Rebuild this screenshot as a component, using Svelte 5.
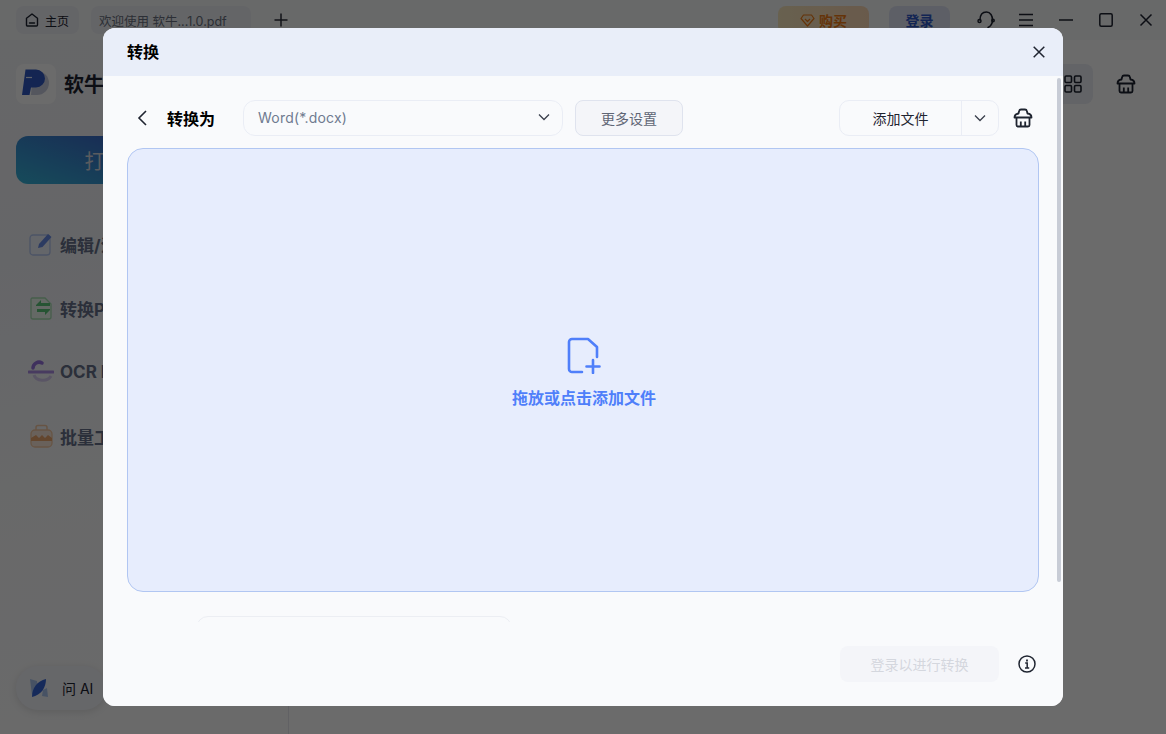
<script>
	const navItems = [
		{ label: '编辑/注释', icon: 'edit' },
		{ label: '转换PDF', icon: 'convert' },
		{ label: 'OCR PDF', icon: 'ocr' },
		{ label: '批量工具', icon: 'batch' }
	];
</script>

{#snippet basket(color)}
	<svg width="20" height="20" viewBox="0 0 20 20" fill="none" stroke={color} stroke-width="1.800" stroke-linejoin="round">
		<path d="M1.500 9.500C1.500 7 3 5.800 5.500 5.500L6.200 2.800Q6.500 1.500 8 1.500H12Q13.500 1.500 13.800 2.800L14.500 5.500C17 5.800 18.500 7 18.500 9.500z" />
		<path d="M3.500 9.500V17a1.500 1.500 0 0 0 1.500 1.500h10a1.500 1.500 0 0 0 1.500-1.500V9.500" />
		<path d="M7.800 13.500v5M12.200 13.500v5" />
	</svg>
{/snippet}

<div class="app">
	<header class="topbar">
		<div class="tab tab--home">
			<svg width="16" height="16" viewBox="0 0 16 16" fill="none" stroke="#1d2330" stroke-width="1.400">
				<path d="M2.500 6.300 8 2l5.500 4.300V13a1 1 0 0 1-1 1h-9a1 1 0 0 1-1-1z" stroke-linejoin="round" />
				<path d="M5.500 11h5" stroke-linecap="round" />
			</svg>
			<span>主页</span>
		</div>
		<div class="tab tab--file">欢迎使用 软牛...1.0.pdf</div>
		<svg class="plus" width="14" height="14" viewBox="0 0 14 14" stroke="#2a2f3a" stroke-width="1.500">
			<path d="M7 .5v13M.5 7h13" />
		</svg>
		<div class="spacer"></div>
		<div class="buy">
			<svg width="15" height="13" viewBox="0 0 15 13" fill="none" stroke="#f07b14" stroke-width="1.200" stroke-linejoin="round">
				<path d="M3.500 1h8L14 4.500 7.500 12 1 4.500z" />
				<path d="M5 5l2.500 2.500L10 5" />
			</svg>
			<span>购买</span>
		</div>
		<div class="login">登录</div>
		<div class="win-icons">
			<svg class="headset" width="18" height="18" viewBox="0 0 18 18" fill="none" stroke="#1d2330" stroke-width="1.500">
				<path d="M3 9C3 4 5.500 1 9.500 1s6 4 6 8c0 3.500-1.500 6-4.500 7.500" stroke-linecap="round" />
				<circle cx="2.500" cy="10" r="1.500" />
				<circle cx="16" cy="9.500" r="1.200" />
			</svg>
			<svg width="14" height="14" viewBox="0 0 14 14" stroke="#1d2330" stroke-width="1.500"><path d="M0 1.500h14M0 7h14M0 12.500h14" /></svg>
			<svg width="14" height="14" viewBox="0 0 14 14" stroke="#1d2330" stroke-width="1.500"><path d="M0 7h14" /></svg>
			<svg width="14" height="14" viewBox="0 0 14 14" fill="none" stroke="#1d2330" stroke-width="1.500"><rect x=".8" y=".8" width="12.400" height="12.400" rx="1.500" /></svg>
			<svg width="14" height="14" viewBox="0 0 14 14" stroke="#1d2330" stroke-width="1.500"><path d="M1.500 1.500l11 11M12.500 1.500l-11 11" /></svg>
		</div>
	</header>

	<div class="main">
		<aside class="sidebar">
			<div class="brand">
				<div class="brand__logo">
					<svg width="30" height="30" viewBox="0 0 30 30">
						<path d="M12 2h4a12 12 0 0 1 0 24h-6z" fill="#c9cee0" />
						<path d="M4.500 .5H15a9 9 0 0 1 0 18h-5L8.500 26H1z" fill="#3058c4" />
						<path d="M5 8.500h6" stroke="#dfe6f7" stroke-width="1.200" />
					</svg>
				</div>
				<span class="brand__name">软牛PDF</span>
			</div>
			<div class="open-btn">打开PDF文件</div>
			<nav class="nav">
				{#each navItems as item}
					<div class="nav__item">
						<svg width="26" height="26" viewBox="0 0 26 26" fill="none">
							{#if item.icon === 'edit'}
								<rect x="2" y="4" width="20" height="20" rx="3" fill="#eef2fc" stroke="#b5c8f2" stroke-width="1.300" />
								<path d="M10 17l1-4 9-10 3.500 3-9 10z" fill="#6a8ce6" />
							{:else if item.icon === 'convert'}
								<path d="M4 3h13l6 6v13a2 2 0 0 1-2 2H5a2 2 0 0 1-2-2V4z" fill="#eef9f0" stroke="#a8dfb3" stroke-width="1.300" />
								<path d="M8 10l5-5v3h9v3H8zM22 15l-5 5v-3H9v-3h13z" fill="#5cc97b" />
							{:else if item.icon === 'ocr'}
								<path d="M5 9a6 6 0 0 1 9-5" stroke="#9672dd" stroke-width="3.500" stroke-linecap="round" />
								<path d="M1 13h24" stroke="#ab8de4" stroke-width="3" stroke-linecap="round" />
								<path d="M6 16a9 7 0 0 0 17 1" stroke="#d6cbf0" stroke-width="3" />
							{:else}
								<rect x="3" y="7" width="21" height="17" rx="4" fill="#fbe8d8" stroke="#f5c8a2" stroke-width="1.300" />
								<path d="M8 7V4.500a2 2 0 0 1 2-2h7a2 2 0 0 1 2 2V7" stroke="#f5c8a2" stroke-width="1.500" />
								<path d="M3 15l5-3 3 3 3-3 3 3 3-3 4 3v3H3z" fill="#eda66e" />
							{/if}
						</svg>
						<span>{item.label}</span>
					</div>
				{/each}
			</nav>
			<div class="ask-ai">
				<svg width="20" height="20" viewBox="0 0 20 20">
					<path d="M1 1l7 2 1 8-6 6z" fill="#a9c4ef" />
					<path d="M19 19l-6-1 1-6 4-2z" fill="#a9c4ef" />
					<path d="M17 1C8 3 3 10 3 19c9-2 14-9 14-18z" fill="#3565d6" />
				</svg>
				<span>问 AI</span>
			</div>
		</aside>

		<section class="content">
			<div class="view-btn">
				<svg width="18" height="18" viewBox="0 0 18 18" fill="none" stroke="#1d2330" stroke-width="1.600">
					<rect x="1" y="1" width="6.500" height="6.500" rx="1.200" />
					<rect x="10.500" y="1" width="6.500" height="6.500" rx="1.200" />
					<rect x="1" y="10.500" width="6.500" height="6.500" rx="1.200" />
					<rect x="10.500" y="10.500" width="6.500" height="6.500" rx="1.200" />
				</svg>
			</div>
			<span class="basket">{@render basket('#1d2330')}</span>
		</section>
	</div>

	<div class="overlay">
		<div class="dialog">
			<div class="dialog__head">
				<span class="dialog__title">转换</span>
				<svg width="12" height="12" viewBox="0 0 12 12" stroke="#1f2430" stroke-width="1.500">
					<path d="M.7.7l10.600 10.600M11.300.7.700 11.300" />
				</svg>
			</div>

			<div class="dialog__body">
				<div class="toolbar">
					<svg class="back" width="10" height="16" viewBox="0 0 10 16" fill="none" stroke="#1f2430" stroke-width="1.600">
						<path d="M9 1 2 8l7 7" />
					</svg>
					<span class="toolbar__label">转换为</span>
					<div class="select">
						<span>Word(*.docx)</span>
						<svg width="12" height="8" viewBox="0 0 12 8" fill="none" stroke="#3a3f4c" stroke-width="1.300"><path d="M1 1.500l5 5 5-5" /></svg>
					</div>
					<div class="more-btn">更多设置</div>
					<div class="spacer"></div>
					<div class="add-btn">
						<span class="add-btn__text">添加文件</span>
						<span class="add-btn__caret">
							<svg width="12" height="8" viewBox="0 0 12 8" fill="none" stroke="#3a3f4c" stroke-width="1.300"><path d="M1 1.500l5 5 5-5" /></svg>
						</span>
					</div>
					<span class="trash">{@render basket('#1f2430')}</span>
				</div>

				<div class="drop">
					<svg width="34" height="37" viewBox="0 0 34 37" fill="none" stroke="#4f7ffa" stroke-width="2.600" stroke-linecap="round" stroke-linejoin="round">
						<path d="M15 35H5a3 3 0 0 1-3-3V5a3 3 0 0 1 3-3h16l9 8v10" />
						<path d="M26 23v13M19.500 29.500h13" />
					</svg>
					<span class="drop__text">拖放或点击添加文件</span>
				</div>

				<div class="panel"></div>
				<div class="scrollbar"></div>
			</div>

			<div class="dialog__foot">
				<div class="submit">登录以进行转换</div>
				<svg width="18" height="18" viewBox="0 0 18 18" fill="none" stroke="#1f2430">
					<circle cx="9" cy="9" r="8" stroke-width="1.500" />
					<path d="M7.200 8h2v5M7 13h4.200" stroke-width="1.500" />
					<path d="M9 4.500v2" stroke-width="1.800" />
				</svg>
			</div>
		</div>
	</div>
</div>

<style>
	:global(body) {
		margin: 0;
	}

	.app {
		position: relative;
		display: flex;
		flex-direction: column;
		width: 1166px;
		height: 734px;
		overflow: hidden;
		background-color: #fff;
		color: #1d2330;
		font-family: Inter, 'Noto Sans CJK SC', sans-serif;
	}

	.spacer {
		flex: 1;
	}

	.topbar {
		display: flex;
		align-items: center;
		padding: 0 0 0 16px;
		height: 40px;
		background: #f8f9fa;
	}

	.tab {
		display: flex;
		align-items: center;
		height: 28px;
		border-radius: 8px;
		background-color: #eef0f5;
		font-size: 12px;
		box-sizing: border-box;
	}

	.tab--home {
		gap: 5px;
		padding: 0 8px;
		width: 63px;
	}

	.tab--file {
		margin-left: 12px;
		padding: 0 8px;
		width: 160px;
		color: #6a7080;
		font-size: 12.500px;
		white-space: nowrap;
	}

	.plus {
		margin-left: 23px;
	}

	.buy {
		display: flex;
		align-items: center;
		justify-content: center;
		gap: 4px;
		width: 91px;
		height: 28px;
		border-radius: 8px;
		background: linear-gradient(90deg, #f7e6bd, #fbd7b4);
		color: #f07b14;
		font-size: 14px;
		font-weight: 700;
	}

	.login {
		display: flex;
		align-items: center;
		justify-content: center;
		margin-left: 20px;
		width: 61px;
		height: 28px;
		border-radius: 8px;
		background-color: #dde2f2;
		color: #2f58c8;
		font-size: 14px;
		font-weight: 700;
	}

	.win-icons {
		display: flex;
		align-items: center;
		gap: 26px;
		margin: 0 13px 0 27px;
	}

	.headset {
		margin-right: -2px;
	}

	.main {
		display: flex;
		flex: 1;
		min-height: 0;
	}

	.sidebar {
		position: relative;
		display: flex;
		flex-direction: column;
		padding: 24px 16px 0;
		width: 289px;
		box-sizing: border-box;
		border-right: 1px solid #e6e8ee;
		background: linear-gradient(170deg, #f4f5f7, #f1f3f8 30%, #f8f9fb 60%, #fdfdfd);
	}

	.brand {
		display: flex;
		align-items: center;
		gap: 8px;
	}

	.brand__logo {
		display: flex;
		align-items: center;
		justify-content: center;
		width: 40px;
		height: 40px;
		border-radius: 8px;
		background-color: #fff;
	}

	.brand__name {
		margin-top: -2px;
		font-size: 20px;
		font-weight: 700;
	}

	.open-btn {
		display: flex;
		align-items: center;
		justify-content: center;
		margin-top: 32px;
		height: 48px;
		width: 256px;
		border-radius: 12px;
		background: linear-gradient(200deg, #3a5cc8 0%, #3a6fcb 45%, #36b4d8 100%);
		color: #d4d8e2;
		font-size: 20px;
		font-weight: 400;
	}

	.nav {
		display: flex;
		flex-direction: column;
		gap: 24px;
		margin-top: 40px;
		padding-left: 12px;
	}

	.nav__item {
		display: flex;
		align-items: center;
		gap: 6px;
		height: 40px;
		font-size: 17px;
		font-weight: 700;
		color: #66718a;
	}

	.ask-ai {
		position: absolute;
		left: 16px;
		bottom: 24px;
		display: flex;
		align-items: center;
		gap: 13px;
		padding-left: 13px;
		width: 90px;
		height: 44px;
		box-sizing: border-box;
		border-radius: 22px;
		background-color: #f3f5fb;
		box-shadow: 0 2px 8px rgba(0, 0, 0, 0.12);
		font-size: 14px;
		white-space: nowrap;
	}

	.content {
		display: flex;
		flex: 1;
		justify-content: flex-end;
		align-items: flex-start;
		gap: 23px;
		padding: 24px 30px 0 0;
	}

	.view-btn {
		display: flex;
		align-items: center;
		justify-content: center;
		width: 40px;
		height: 40px;
		border-radius: 8px;
		background-color: #eceef5;
	}

	.basket {
		display: flex;
		margin-top: 10px;
	}

	.overlay {
		position: absolute;
		inset: 0;
		display: flex;
		align-items: center;
		justify-content: center;
		background-color: rgba(0, 0, 0, 0.58);
	}

	.dialog {
		display: flex;
		flex-direction: column;
		width: 960px;
		height: 678px;
		border-radius: 12px;
		overflow: hidden;
		background-color: #f9fafc;
	}

	.dialog__head {
		display: flex;
		align-items: center;
		justify-content: space-between;
		flex-shrink: 0;
		padding: 0 18px 0 24px;
		height: 48px;
		background-color: #e9eef9;
	}

	.dialog__title {
		margin-top: -2px;
		color: #000;
		font-size: 16px;
		font-weight: 700;
	}

	.dialog__body {
		position: relative;
		flex: 1;
		min-height: 0;
		padding: 24px 24px 0;
		overflow: hidden;
	}

	.toolbar {
		display: flex;
		align-items: center;
		height: 36px;
	}

	.back {
		margin-left: 10px;
	}

	.toolbar__label {
		margin-left: 20px;
		color: #000;
		font-size: 16px;
		font-weight: 700;
	}

	.select {
		display: flex;
		align-items: center;
		justify-content: space-between;
		margin-left: 28px;
		padding: 0 12px 2px 14px;
		width: 320px;
		height: 36px;
		box-sizing: border-box;
		border: 1px solid #eaedf5;
		border-radius: 12px;
		color: #6f7a90;
		font-size: 14px;
		letter-spacing: 0.200px;
	}

	.more-btn {
		display: flex;
		align-items: center;
		justify-content: center;
		margin-left: 12px;
		width: 108px;
		height: 36px;
		box-sizing: border-box;
		border: 1px solid #dfe3ee;
		border-radius: 8px;
		background-color: #f4f5f9;
		color: #5f6675;
		font-size: 14px;
	}

	.add-btn {
		display: flex;
		align-items: center;
		width: 160px;
		height: 36px;
		box-sizing: border-box;
		border: 1px solid #eaedf5;
		border-radius: 10px;
		color: #1f2430;
		font-size: 14px;
	}

	.add-btn__text {
		flex: 1;
		text-align: center;
	}

	.add-btn__caret {
		display: flex;
		align-items: center;
		justify-content: center;
		width: 36px;
		height: 100%;
		border-left: 1px solid #eaedf5;
	}

	.trash {
		display: flex;
		margin: 0 6px 0 14px;
	}

	.drop {
		display: flex;
		flex-direction: column;
		align-items: center;
		justify-content: center;
		gap: 11px;
		margin-top: 12px;
		padding: 6px 0 0 2px;
		height: 444px;
		box-sizing: border-box;
		border: 1px solid #b1c6f2;
		border-radius: 16px;
		background-color: #e7edfd;
	}

	.drop__text {
		color: #4f7ffa;
		font-size: 16px;
		font-weight: 700;
	}

	.panel {
		margin: 24px 0 0 69px;
		width: 316px;
		height: 40px;
		box-sizing: border-box;
		border: 1px solid #eceef3;
		border-radius: 12px;
	}

	.scrollbar {
		position: absolute;
		top: 2px;
		right: 2px;
		width: 4px;
		height: 504px;
		border-radius: 2px;
		background-color: #c8ccd6;
	}

	.dialog__foot {
		display: flex;
		align-items: center;
		justify-content: flex-end;
		flex-shrink: 0;
		gap: 19px;
		padding: 0 27px 0 0;
		height: 84px;
		background-color: #f9fafc;
	}

	.submit {
		display: flex;
		align-items: center;
		justify-content: center;
		width: 159px;
		height: 36px;
		border-radius: 8px;
		background-color: #f4f5f9;
		color: #d4d7de;
		font-size: 14px;
	}
</style>
